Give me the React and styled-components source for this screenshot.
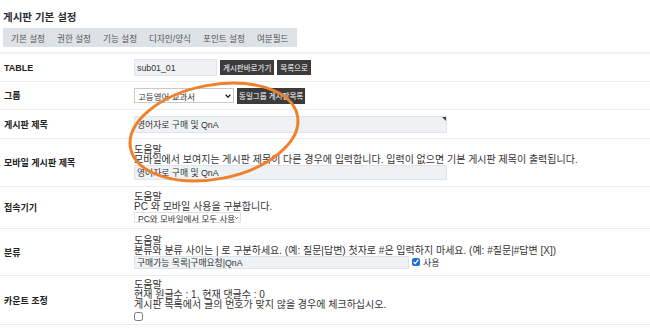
import React from "react";
import styled, { createGlobalStyle } from "styled-components";

const Global = createGlobalStyle`
  html, body { margin: 0; padding: 0; background: #fff; }
  body {
    font-family: "Liberation Sans", "Noto Sans CJK KR", sans-serif;
    color: #333;
  }
`;

const Page = styled.div`
  position: relative;
  width: 650px;
  height: 328px;
  overflow: hidden;
  padding-top: 10px;
  box-sizing: border-box;
`;

const Title = styled.h2`
  margin: 0 0 4px 3px;
  font-size: 10.5px;
  line-height: 14px;
  font-weight: bold;
  color: #2a2a2a;
`;

const TabBar = styled.div`
  display: flex;
  width: fit-content;
  align-items: center;
  height: 19px;
  margin-left: 3px;
  padding: 0 2px;
  background: #dde2e6;
`;

const Tab = styled.div`
  padding: 0 6px;
  font-size: 8.6px;
  color: #555;
  white-space: nowrap;
`;

const Table = styled.div`
  margin-top: 5px;
  border-top: 2px solid #f2f2f2;
`;

const Row = styled.div`
  display: grid;
  grid-template-columns: 134px 1fr;
  align-items: center;
  height: ${(p) => p.$h}px;
  box-sizing: border-box;
  border-bottom: 1px solid #ececec;
`;

const Label = styled.div`
  padding-left: 4px;
  font-size: 9px;
  font-weight: bold;
  color: #222;
  white-space: nowrap;
`;

const Cell = styled.div`
  display: flex;
  flex-direction: column;
  align-items: flex-start;
`;

const Inline = styled.div`
  display: flex;
  align-items: center;
  gap: ${(p) => p.$gap ?? 3}px;
`;

const Help = styled.div`
  font-size: 10px;
  line-height: 10px;
  height: 10px;
  color: #333;
  white-space: nowrap;
`;

const InputWrap = styled.div`
  position: relative;
  display: flex;
  justify-self: start;
  width: fit-content;
  ${(p) =>
    p.$marker &&
    `&::after {
      content: "";
      position: absolute;
      top: 1px;
      right: 1px;
      border-style: solid;
      border-width: 0 4px 4px 0;
      border-color: transparent #444 transparent transparent;
    }`}
`;

const TextInput = styled.input`
  width: ${(p) => p.$w}px;
  height: ${(p) => p.$h}px;
  box-sizing: border-box;
  margin: 0;
  padding: 0 2px;
  border: 1px solid #dfe4e8;
  background: #eef2f5;
  font-family: inherit;
  font-size: 8.8px;
  color: #333;
  outline: none;
`;

const DarkButton = styled.button`
  height: ${(p) => p.$h ?? 15}px;
  margin: 0;
  padding: 0 ${(p) => p.$px ?? 3}px;
  border: 0;
  background: #3b3b3b;
  color: #fff;
  font-family: inherit;
  font-size: 7.5px;
  white-space: nowrap;
`;

const FakeSelect = styled.div`
  display: flex;
  align-items: center;
  justify-content: space-between;
  width: ${(p) => p.$w}px;
  height: ${(p) => p.$h}px;
  box-sizing: border-box;
  padding: 0 2px 0 3px;
  border: 1px solid ${(p) => p.$border};
  background: #fff;
  font-size: 8.5px;
  color: #333;
  white-space: nowrap;
`;

const Check = styled.input`
  width: ${(p) => p.$s}px;
  height: ${(p) => p.$s}px;
  margin: ${(p) => p.$m ?? "0"};
  accent-color: #1e6fd9;
`;

const SmallText = styled.span`
  font-size: 9px;
  color: #333;
`;

const Overlay = styled.svg`
  position: absolute;
  left: 0;
  top: 0;
  pointer-events: none;
`;

const Chevron = () => (
  <svg width="6" height="4" viewBox="0 0 6 4">
    <polyline points="0.6,0.6 3,3.2 5.4,0.6" fill="none" stroke="#222" strokeWidth="1.4" />
  </svg>
);

const tabs = ["기본 설정", "권한 설정", "기능 설정", "디자인/양식", "포인트 설정", "여분필드"];

export default function App() {
  return (
    <Page>
      <Global />
      <Title>게시판 기본 설정</Title>
      <TabBar>
        {tabs.map((t) => (
          <Tab key={t}>{t}</Tab>
        ))}
      </TabBar>
      <Table>
        <Row $h={28}>
          <Label>TABLE</Label>
          <Inline>
            <TextInput $w={83} $h={17} readOnly value="sub01_01" />
            <DarkButton>게시판바로가기</DarkButton>
            <DarkButton>목록으로</DarkButton>
          </Inline>
        </Row>
        <Row $h={28}>
          <Label>그룹</Label>
          <Inline>
            <FakeSelect $w={100} $h={15} $border="#c9c9c9">
              <span>고등영어 교과서</span>
              <Chevron />
            </FakeSelect>
            <DarkButton $h={16} $px={2}>동일그룹 게시판목록</DarkButton>
          </Inline>
        </Row>
        <Row $h={29}>
          <Label>게시판 제목</Label>
          <InputWrap $marker>
            <TextInput $w={313} $h={17} readOnly value="영어자로 구매 및 QnA" />
          </InputWrap>
        </Row>
        <Row $h={48}>
          <Label>모바일 게시판 제목</Label>
          <Cell>
            <Help>도움말</Help>
            <Help>모바일에서 보여지는 게시판 제목이 다른 경우에 입력합니다. 입력이 없으면 기본 게시판 제목이 출력됩니다.</Help>
            <TextInput $w={313} $h={15} readOnly value="영어자로 구매 및 QnA" />
          </Cell>
        </Row>
        <Row $h={42}>
          <Label>접속기기</Label>
          <Cell>
            <Help>도움말</Help>
            <Help>PC 와 모바일 사용을 구분합니다.</Help>
            <FakeSelect $w={107} $h={11} $border="#e2e2e2">
              <span>PC와 모바일에서 모두 사용</span>
              <Chevron />
            </FakeSelect>
          </Cell>
        </Row>
        <Row $h={47}>
          <Label>분류</Label>
          <Cell>
            <Help>도움말</Help>
            <Help>분류와 분류 사이는 | 로 구분하세요. (예: 질문|답변) 첫자로 #은 입력하지 마세요. (예: #질문|#답변 [X])</Help>
            <Inline $gap={3}>
              <TextInput $w={275} $h={13} readOnly value="구매가능 목록|구매요청|QnA" />
              <Check type="checkbox" defaultChecked $s={8} />
              <SmallText>사용</SmallText>
            </Inline>
          </Cell>
        </Row>
        <Row $h={49}>
          <Label>카운트 조정</Label>
          <Cell>
            <Help>도움말</Help>
            <Help>현재 원글수 : 1, 현재 댓글수 : 0</Help>
            <Help>게시판 목록에서 글의 번호가 맞지 않을 경우에 체크하십시오.</Help>
            <Check type="checkbox" $s={9} $m="2px 0 0 0" />
          </Cell>
        </Row>
      </Table>
      <Overlay width="650" height="328" viewBox="0 0 650 328">
        <ellipse
          cx="214"
          cy="132"
          rx="85"
          ry="47"
          transform="rotate(-11 214 132)"
          fill="none"
          stroke="#f0812c"
          strokeWidth="3"
        />
      </Overlay>
    </Page>
  );
}
